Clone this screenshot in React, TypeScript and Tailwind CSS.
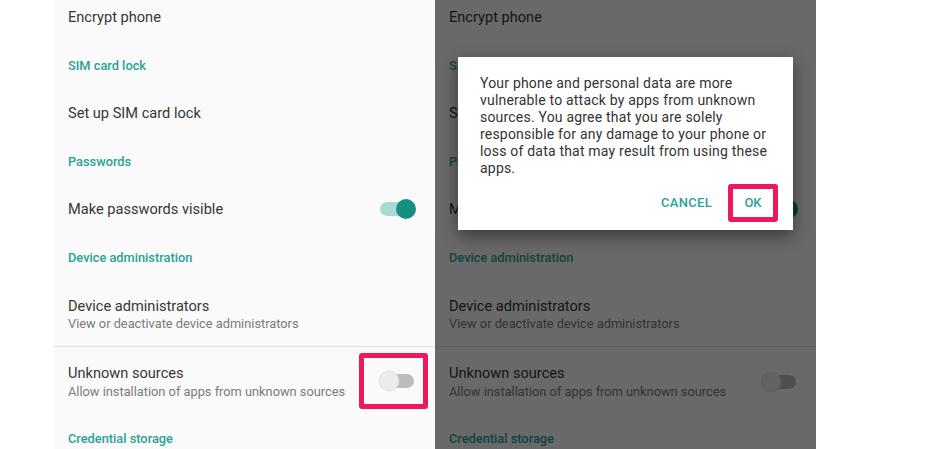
import React from "react";

const FONT = { fontFamily: "Roboto, 'Noto Sans', 'Liberation Sans', sans-serif" };

function SwitchOn() {
  return (
    <svg width="40" height="22" viewBox="0 0 40 22">
      <rect x="2" y="4" width="34" height="14" rx="7" fill="#a9dbd5" />
      <circle cx="28" cy="11" r="10" fill="#14907f" />
    </svg>
  );
}

function SwitchOff() {
  return (
    <svg width="40" height="22" viewBox="0 0 40 22">
      <rect x="5" y="4" width="31" height="14" rx="7" fill="#bcbcbc" />
      <circle cx="11" cy="11" r="10" fill="#ececec" stroke="#dcdcdc" strokeWidth="0.8" />
    </svg>
  );
}

function Header({ children }: { children: React.ReactNode }) {
  return (
    <div className="h-12 pt-[3px] flex items-center pl-[14px] text-[12.8px] font-medium text-[#2aa295]">
      {children}
    </div>
  );
}

function Title({ children }: { children: React.ReactNode }) {
  return <div className="text-[14.6px] leading-[18px] text-[#363636]">{children}</div>;
}

function Sub({ children }: { children: React.ReactNode }) {
  return <div className="text-[12.8px] leading-[18px] text-[#7a7a7a]">{children}</div>;
}

function SettingsList({ highlight }: { highlight: boolean }) {
  return (
    <div className="flex flex-col">
      <div className="h-10 pb-[6px] flex items-center pl-[14px]">
        <Title>Encrypt phone</Title>
      </div>
      <Header>SIM card lock</Header>
      <div className="h-12 pt-[2px] flex items-center pl-[14px]">
        <Title>Set up SIM card lock</Title>
      </div>
      <Header>Passwords</Header>
      <div className="h-12 pt-[2px] flex items-center justify-between pl-[14px] pr-[16px]">
        <Title>Make passwords visible</Title>
        <SwitchOn />
      </div>
      <Header>Device administration</Header>
      <div className="h-[66px] flex flex-col justify-center pl-[14px] pt-[3px]">
        <Title>Device administrators</Title>
        <Sub>View or deactivate device administrators</Sub>
      </div>
      <div className="h-px bg-[#e2e2e2]" />
      <div className="h-[68px] pt-[2px] flex items-center justify-between pl-[14px]">
        <div className="flex flex-col">
          <div className="text-[14.6px] leading-[19px] text-[#363636]">Unknown sources</div>
          <Sub>Allow installation of apps from unknown sources</Sub>
        </div>
        {highlight ? (
          <div className="mr-[6px] -mt-[2px] w-[69px] h-[56px] border-[5px] border-[#f0185c] rounded-[3px] flex items-center pl-[14px]">
            <SwitchOff />
          </div>
        ) : (
          <div className="mr-[16px]">
            <SwitchOff />
          </div>
        )}
      </div>
      <div className="h-[46px] pt-[2px] flex items-center pl-[14px] text-[12.8px] font-medium text-[#2aa295]">
        Credential storage
      </div>
    </div>
  );
}

export default function App() {
  return (
    <div className="w-[941px] h-[449px] bg-white flex overflow-hidden" style={FONT}>
      <div className="ml-[54px] w-[380px] h-[449px] bg-[#fafafa] overflow-hidden">
        <SettingsList highlight />
      </div>
      <div className="ml-px w-[381px] h-[449px] bg-[#fafafa] overflow-hidden relative">
        <SettingsList highlight={false} />
        <div className="absolute inset-0 bg-black/[0.58]" />
        <div className="absolute left-[23px] top-[57px] w-[335px] h-[173px] bg-white shadow-[0_6px_16px_rgba(0,0,0,0.45)] flex flex-col">
          <div className="pt-[18px] px-[22px] text-[14px] leading-[17px] tracking-[0.2px] text-[#333]">
            Your phone and personal data are more vulnerable to attack by apps from unknown sources. You agree that you are solely responsible for any damage to your phone or loss of data that may result from using these apps.
          </div>
          <div className="mt-auto mb-[8px] mr-[15px] flex items-center justify-end gap-[16px]">
            <div className="text-[13px] font-medium text-[#2aa295] tracking-[0.3px]">CANCEL</div>
            <div className="w-[50px] h-[38px] border-[5px] border-[#f0185c] rounded-[3px] flex items-center justify-center text-[13px] font-medium text-[#2aa295]">
              OK
            </div>
          </div>
        </div>
      </div>
    </div>
  );
}
